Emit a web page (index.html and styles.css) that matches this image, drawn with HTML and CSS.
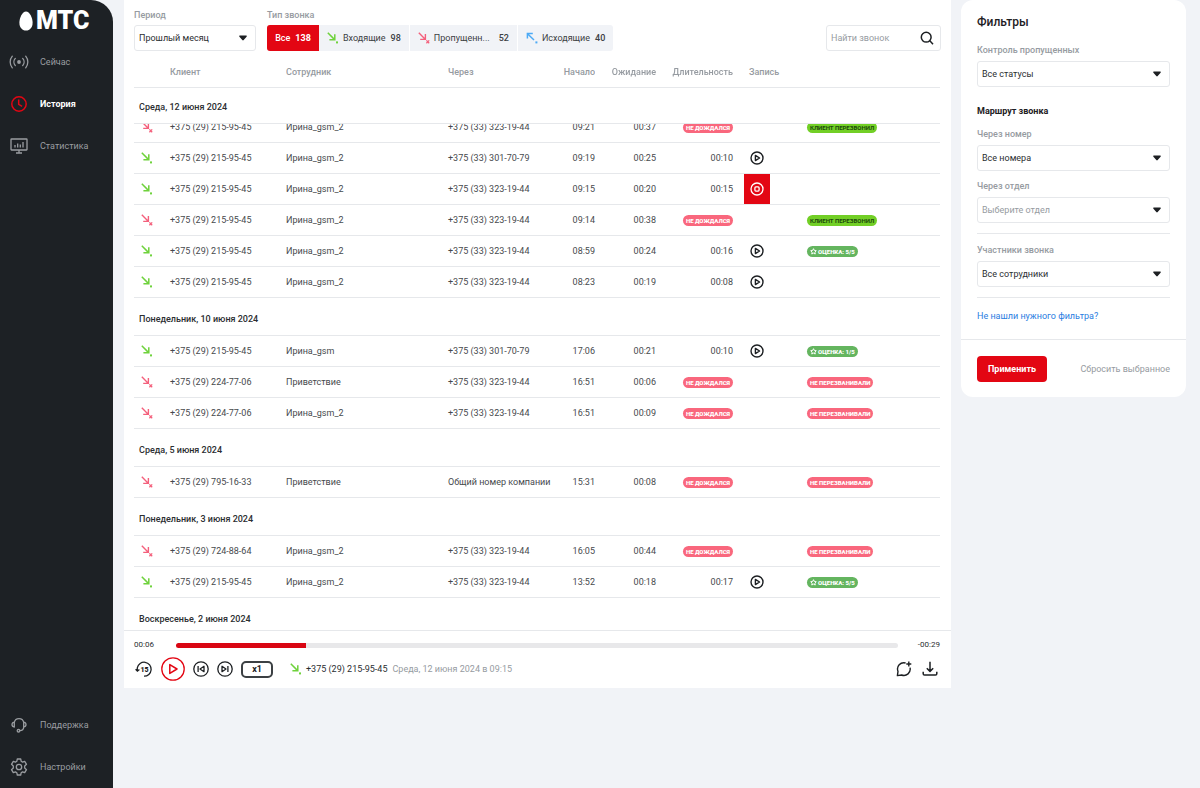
FILE: index.html
```html
<!DOCTYPE html>
<html lang="ru">
<head>
<meta charset="utf-8">
<meta name="viewport" content="width=device-width, initial-scale=1">
<title>МТС — История звонков</title>
<link rel="stylesheet" href="styles.css">
</head>
<body>
<svg class="sprite" aria-hidden="true">
  <symbol id="in" viewBox="0 0 12 12"><path d="M.8.8 7.6 7.6M7.8 2.2v5.6H2.4" fill="none" stroke="#6fd23c" stroke-width="1.5"/><rect x="9" y="9.4" width="2" height="2" fill="#6fd23c"/></symbol>
  <symbol id="missed" viewBox="0 0 12 12"><path d="M.8.8 7.2 7.2M7.4 2v5.4H2.2" fill="none" stroke="#f4607c" stroke-width="1.4"/><path d="m8.4 8.4 2.8 2.8m0-2.8-2.8 2.8" stroke="#f4607c" stroke-width="1.3"/></symbol>
  <symbol id="out" viewBox="0 0 12 12"><path d="M1 1.2 8 8M1.4 6.6V1.4h5.4" fill="none" stroke="#4daaf5" stroke-width="1.5"/><rect x="9.4" y="9.4" width="2" height="2" fill="#4daaf5"/></symbol>
  <symbol id="play" viewBox="0 0 14 14"><g fill="none" stroke="currentColor" stroke-width="1.4" stroke-linejoin="round"><circle cx="7" cy="7" r="6"/><path d="M5.4 4.4v5.2L9.6 7z"/></g></symbol>
  <symbol id="stop" viewBox="0 0 14 14"><g fill="none" stroke="currentColor" stroke-width="1.3"><circle cx="7" cy="7" r="6"/><rect x="4.9" y="4.9" width="4.2" height="4.2" rx="1"/></g></symbol>
  <symbol id="caret" viewBox="0 0 8 6"><path d="M1 .5h6c.8 0 1 .7.6 1.200L4.700 5.100c-.4.5-1 .5-1.400 0L.4 1.700C0 1.200.2.5 1 .5z" fill="#1d2023"/></symbol>
  <symbol id="star" viewBox="0 0 10 10"><path d="m5 1 1.200 2.500 2.800.4-2 2 .5 2.700L5 7.300 2.500 8.600 3 5.900l-2-2 2.800-.4z" fill="none" stroke="#fff" stroke-width="1.400"/></symbol>
</svg>

<div class="app">
  <aside class="sidebar">
    <a class="logo" href="#" aria-label="МТС">
      <svg width="14" height="20" viewBox="0 0 14 20" aria-hidden="true"><path d="M7 .5c3.600 0 6.600 6.200 6.600 11.200 0 4.600-2.600 7.800-6.600 7.800S.4 16.300.4 11.700C.4 6.700 3.400.5 7 .5z" fill="#fff"/></svg>
      <span>МТС</span>
    </a>
    <nav class="menu">
      <a class="menu-item" href="#">
        <svg width="20" height="14" viewBox="0 0 20 14" fill="none" stroke="currentColor" stroke-width="1.300" stroke-linecap="round"><circle cx="10" cy="7" r="1.900" fill="currentColor" stroke="none"/><path d="M6.300 3.400a5.400 5.400 0 0 0 0 7.200M13.700 3.400a5.400 5.400 0 0 1 0 7.200M3.300 1.200a9 9 0 0 0 0 11.600M16.700 1.200a9 9 0 0 1 0 11.600"/></svg>
        <span>Сейчас</span>
      </a>
      <a class="menu-item active" href="#">
        <svg width="20" height="18" viewBox="0 0 20 18" fill="none" stroke="#e30613" stroke-width="1.500"><circle cx="10" cy="9" r="7.200"/><path d="M9.700 4.500V9.400l3.400 2"/></svg>
        <span>История</span>
      </a>
      <a class="menu-item" href="#">
        <svg width="20" height="16" viewBox="0 0 20 16" fill="none" stroke="currentColor" stroke-width="1.300"><rect x="2" y="1" width="16" height="11" rx=".5"/><path d="M10 12v2.500M7 15h6M6 9.500V7M8.700 9.500V5.500M11.300 9.500V6.500M14 9.500V4"/></svg>
        <span>Статистика</span>
      </a>
      <a class="menu-item menu-bottom" href="#">
        <svg width="20" height="16" viewBox="0 0 20 16" fill="none" stroke="currentColor" stroke-width="1.300" stroke-linejoin="round"><path d="M5.300 5.400a4.800 4.800 0 0 1 9.400 0M5.300 5.200v4.800c-1.600 0-2.300-.9-2.300-2.400s.7-2.400 2.300-2.400zM14.700 5.200v4.800c1.600 0 2.300-.9 2.300-2.400s-.7-2.400-2.300-2.400zM14.700 10c0 2.400-1.300 3.700-3.900 3.700"/><circle cx="9.500" cy="13.700" r="1.300"/></svg>
        <span>Поддержка</span>
      </a>
      <a class="menu-item" href="#">
        <svg width="20" height="18" viewBox="0 0 20 18" fill="none" stroke="currentColor" stroke-width="1.300" stroke-linejoin="round"><path d="M8.300 1h3.400l.5 2.300 1.300.8 2.200-.8 1.800 3-1.800 1.600v2.200l1.800 1.600-1.800 3-2.200-.8-1.300.8-.5 2.300H8.300l-.5-2.300-1.300-.8-2.200.8-1.800-3 1.800-1.600V7.900L2.500 6.300l1.800-3 2.200.8 1.300-.8z"/><circle cx="10" cy="9" r="2.700"/></svg>
        <span>Настройки</span>
      </a>
    </nav>
  </aside>

  <main class="calls">
    <form class="toolbar">
      <div class="field period">
        <label for="period">Период</label>
        <div class="select"><select id="period"><option>Прошлый месяц</option></select><svg><use href="#caret"/></svg></div>
      </div>
      <div class="field">
        <span class="caption" id="type-caption">Тип звонка</span>
        <div class="types" role="group" aria-labelledby="type-caption">
          <button type="button" class="type type-all">Все <b>138</b></button>
          <button type="button" class="type"><svg><use href="#in"/></svg><span>Входящие</span><b>98</b></button>
          <button type="button" class="type type-missed"><svg><use href="#missed"/></svg><span>Пропущенн...</span><b>52</b></button>
          <button type="button" class="type"><svg><use href="#out"/></svg><span>Исходящие</span><b>40</b></button>
        </div>
      </div>
      <div class="search">
        <input type="text" placeholder="Найти звонок" aria-label="Найти звонок">
        <button type="submit" aria-label="Найти"><svg width="14" height="14" viewBox="0 0 14 14" fill="none" stroke="#1d2023" stroke-width="1.500"><circle cx="6.200" cy="6.200" r="4.900"/><path d="m9.600 9.600 3.400 3.600"/></svg></button>
      </div>
    </form>

    <div class="list" id="list">
      <table>
        <colgroup><col class="c-icon"><col class="c-client"><col class="c-employee"><col class="c-via"><col class="c-start"><col class="c-wait"><col class="c-length"><col class="c-record"><col></colgroup>
        <thead>
          <tr><th></th><th>Клиент</th><th>Сотрудник</th><th>Через</th><th class="num">Начало</th><th class="num">Ожидание</th><th class="num">Длительность</th><th class="record-head">Запись</th><th></th></tr>
        </thead>
        <tbody>
          <tr class="day"><th colspan="9">Среда, 12 июня 2024</th></tr>
          <tr><td><svg><use href="#missed"/></svg></td><td>+375 (29) 215-95-45</td><td>Ирина_gsm_2</td><td>+375 (33) 323-19-44</td><td class="num">09:21</td><td class="num">00:37</td><td class="num"><span class="tag red">НЕ ДОЖДАЛСЯ</span></td><td></td><td><span class="tag lime">КЛИЕНТ ПЕРЕЗВОНИЛ</span></td></tr>
          <tr><td><svg><use href="#in"/></svg></td><td>+375 (29) 215-95-45</td><td>Ирина_gsm_2</td><td>+375 (33) 301-70-79</td><td class="num">09:19</td><td class="num">00:25</td><td class="num">00:10</td><td><button class="record" aria-label="Слушать"><svg><use href="#play"/></svg></button></td><td></td></tr>
          <tr><td><svg><use href="#in"/></svg></td><td>+375 (29) 215-95-45</td><td>Ирина_gsm_2</td><td>+375 (33) 323-19-44</td><td class="num">09:15</td><td class="num">00:20</td><td class="num">00:15</td><td><button class="record current" aria-label="Остановить"><svg><use href="#stop"/></svg></button></td><td></td></tr>
          <tr><td><svg><use href="#missed"/></svg></td><td>+375 (29) 215-95-45</td><td>Ирина_gsm_2</td><td>+375 (33) 323-19-44</td><td class="num">09:14</td><td class="num">00:38</td><td class="num"><span class="tag red">НЕ ДОЖДАЛСЯ</span></td><td></td><td><span class="tag lime">КЛИЕНТ ПЕРЕЗВОНИЛ</span></td></tr>
          <tr><td><svg><use href="#in"/></svg></td><td>+375 (29) 215-95-45</td><td>Ирина_gsm_2</td><td>+375 (33) 323-19-44</td><td class="num">08:59</td><td class="num">00:24</td><td class="num">00:16</td><td><button class="record" aria-label="Слушать"><svg><use href="#play"/></svg></button></td><td><span class="tag green"><svg><use href="#star"/></svg>ОЦЕНКА: 5/5</span></td></tr>
          <tr><td><svg><use href="#in"/></svg></td><td>+375 (29) 215-95-45</td><td>Ирина_gsm_2</td><td>+375 (33) 323-19-44</td><td class="num">08:23</td><td class="num">00:19</td><td class="num">00:08</td><td><button class="record" aria-label="Слушать"><svg><use href="#play"/></svg></button></td><td></td></tr>
        </tbody>
        <tbody>
          <tr class="day"><th colspan="9">Понедельник, 10 июня 2024</th></tr>
          <tr><td><svg><use href="#in"/></svg></td><td>+375 (29) 215-95-45</td><td>Ирина_gsm</td><td>+375 (33) 301-70-79</td><td class="num">17:06</td><td class="num">00:21</td><td class="num">00:10</td><td><button class="record" aria-label="Слушать"><svg><use href="#play"/></svg></button></td><td><span class="tag green"><svg><use href="#star"/></svg>ОЦЕНКА: 1/5</span></td></tr>
          <tr><td><svg><use href="#missed"/></svg></td><td>+375 (29) 224-77-06</td><td>Приветствие</td><td>+375 (33) 323-19-44</td><td class="num">16:51</td><td class="num">00:06</td><td class="num"><span class="tag red">НЕ ДОЖДАЛСЯ</span></td><td></td><td><span class="tag red">НЕ ПЕРЕЗВАНИВАЛИ</span></td></tr>
          <tr><td><svg><use href="#missed"/></svg></td><td>+375 (29) 224-77-06</td><td>Ирина_gsm_2</td><td>+375 (33) 323-19-44</td><td class="num">16:51</td><td class="num">00:09</td><td class="num"><span class="tag red">НЕ ДОЖДАЛСЯ</span></td><td></td><td><span class="tag red">НЕ ПЕРЕЗВАНИВАЛИ</span></td></tr>
        </tbody>
        <tbody>
          <tr class="day"><th colspan="9">Среда, 5 июня 2024</th></tr>
          <tr><td><svg><use href="#missed"/></svg></td><td>+375 (29) 795-16-33</td><td>Приветствие</td><td>Общий номер компании</td><td class="num">15:31</td><td class="num">00:08</td><td class="num"><span class="tag red">НЕ ДОЖДАЛСЯ</span></td><td></td><td><span class="tag red">НЕ ПЕРЕЗВАНИВАЛИ</span></td></tr>
        </tbody>
        <tbody>
          <tr class="day"><th colspan="9">Понедельник, 3 июня 2024</th></tr>
          <tr><td><svg><use href="#missed"/></svg></td><td>+375 (29) 724-88-64</td><td>Ирина_gsm_2</td><td>+375 (33) 323-19-44</td><td class="num">16:05</td><td class="num">00:44</td><td class="num"><span class="tag red">НЕ ДОЖДАЛСЯ</span></td><td></td><td><span class="tag red">НЕ ПЕРЕЗВАНИВАЛИ</span></td></tr>
          <tr><td><svg><use href="#in"/></svg></td><td>+375 (29) 215-95-45</td><td>Ирина_gsm_2</td><td>+375 (33) 323-19-44</td><td class="num">13:52</td><td class="num">00:18</td><td class="num">00:17</td><td><button class="record" aria-label="Слушать"><svg><use href="#play"/></svg></button></td><td><span class="tag green"><svg><use href="#star"/></svg>ОЦЕНКА: 5/5</span></td></tr>
        </tbody>
        <tbody>
          <tr class="day"><th colspan="9">Воскресенье, 2 июня 2024</th></tr>
        </tbody>
      </table>
    </div>

    <section class="player" aria-label="Проигрыватель">
      <div class="timeline">
        <span class="time">00:06</span>
        <input class="seek" type="range" min="0" max="100" value="18" aria-label="Позиция записи">
        <span class="time time-left">-00:29</span>
      </div>
      <div class="controls">
        <button aria-label="Назад на 15 секунд"><svg width="18" height="18" viewBox="0 0 18 18"><path d="M2.300 11V7.800A7 7 0 1 1 9 16.200M.6 9.200l1.800 2 2-1.800" fill="none" stroke="#1d2023" stroke-width="1.300"/><text x="9.500" y="11.600" text-anchor="middle" class="rewind-text">15</text></svg></button>
        <button aria-label="Воспроизвести"><svg width="24" height="24" viewBox="0 0 24 24" fill="none" stroke="#e30613" stroke-width="1.300" stroke-linejoin="round"><circle cx="12" cy="12" r="11.200"/><path d="M8.800 7.600v8.800l7.200-4.400z" stroke-width="1.500"/></svg></button>
        <button aria-label="Предыдущая запись"><svg width="16" height="16" viewBox="0 0 16 16" fill="none" stroke="#1d2023" stroke-width="1.300" stroke-linejoin="round"><circle cx="8" cy="8" r="7.200"/><path d="M5.100 5v6M11 5.300v5.400L7 8z"/></svg></button>
        <button aria-label="Следующая запись"><svg width="16" height="16" viewBox="0 0 16 16" fill="none" stroke="#1d2023" stroke-width="1.300" stroke-linejoin="round"><circle cx="8" cy="8" r="7.200"/><path d="M10.900 5v6M5 5.300v5.400L9 8z"/></svg></button>
        <button class="speed">x1</button>
        <svg class="direction"><use href="#in"/></svg>
        <span class="phone">+375 (29) 215-95-45</span>
        <span class="date">Среда, 12 июня 2024 в 09:15</span>
        <button class="comment" aria-label="Добавить комментарий"><svg width="16" height="16" viewBox="0 0 16 16" fill="none" stroke="#1d2023" stroke-width="1.400" stroke-linejoin="round"><path d="M9.600 2A6.300 6.300 0 0 0 2 10.400L1.400 14.600 5.600 14A6.300 6.300 0 0 0 14 6.600M12.800.5v5M10.300 3h5"/></svg></button>
        <button aria-label="Скачать"><svg width="16" height="16" viewBox="0 0 16 16" fill="none" stroke="#1d2023" stroke-width="1.500" stroke-linejoin="round"><path d="M8 .8v9.400M4.800 7.200 8 10.400l3.200-3.200M1.200 10.800v2c0 .8.500 1.300 1.300 1.300h11c.8 0 1.300-.5 1.300-1.300v-2"/></svg></button>
      </div>
    </section>
  </main>

  <form class="filters">
    <div class="filters-body">
      <h2>Фильтры</h2>
      <div class="field">
        <label for="control">Контроль пропущенных</label>
        <div class="select"><select id="control"><option>Все статусы</option></select><svg><use href="#caret"/></svg></div>
      </div>
      <h3>Маршрут звонка</h3>
      <div class="field">
        <label for="number">Через номер</label>
        <div class="select"><select id="number"><option>Все номера</option></select><svg><use href="#caret"/></svg></div>
      </div>
      <div class="field next">
        <label for="department">Через отдел</label>
        <div class="select"><select id="department" class="empty"><option>Выберите отдел</option></select><svg><use href="#caret"/></svg></div>
      </div>
      <hr>
      <div class="field">
        <label for="members">Участники звонка</label>
        <div class="select"><select id="members"><option>Все сотрудники</option></select><svg><use href="#caret"/></svg></div>
      </div>
      <hr>
      <a class="help" href="#">Не нашли нужного фильтра?</a>
    </div>
    <div class="filters-footer">
      <button type="submit" class="apply">Применить</button>
      <button type="reset" class="reset">Сбросить выбранное</button>
    </div>
  </form>
</div>
<script src="script.js"></script>
</body>
</html>
```

FILE: styles.css
```css
* { box-sizing: border-box; }

body {
  margin: 0;
  background: #f1f3f7;
  color: #46494d;
  font: 9px/12px Roboto, "Liberation Sans", sans-serif;
}

button, input, select { font: inherit; color: inherit; }

button {
  margin: 0;
  padding: 0;
  border: 0;
  background: none;
  cursor: pointer;
}

a { text-decoration: none; }
svg { display: block; flex: none; }
.sprite { position: absolute; width: 0; height: 0; }

.app {
  display: flex;
  align-items: flex-start;
  min-height: 100vh;
  padding-right: 14px;
}

/* Sidebar */
.sidebar {
  display: flex;
  flex-direction: column;
  flex: 0 0 113px;
  height: 100vh;
  background: #1d2125;
  border-radius: 0 22px 0 0;
}

.logo {
  display: flex;
  align-items: center;
  gap: 3px;
  height: 41px;
  padding-left: 19px;
  color: #fff;
  font-size: 25px;
  font-weight: 900;
  line-height: 41px;
}

.menu { display: flex; flex-direction: column; flex: 1; }

.menu-item {
  display: flex;
  align-items: center;
  gap: 11px;
  height: 42px;
  padding-left: 9px;
  color: #9a9da1;
}

.menu-item.active { color: #fff; font-weight: 700; }
.menu-bottom { margin-top: auto; }

/* Call list */
.calls {
  display: flex;
  flex-direction: column;
  flex: 1;
  min-width: 0;
  height: calc(100vh - 100px);
  margin: 0 10px 0 11px;
  background: #fff;
}

.toolbar {
  display: flex;
  align-items: flex-end;
  gap: 11px;
  padding: 9px 10px 5px;
}

.field { display: flex; flex-direction: column; gap: 4px; }
.field label, .caption { color: #969ba1; font-weight: 500; }
.period { width: 122px; }

.select { display: grid; align-items: center; }
.select > * { grid-area: 1 / 1; }

.select select {
  width: 100%;
  height: 26px;
  padding: 0 24px 0 4px;
  border: 1px solid #e6e8eb;
  border-radius: 3px;
  background: #fff;
  color: #2b2e31;
  appearance: none;
}

.select select.empty { color: #969ba1; }

.select svg {
  justify-self: end;
  width: 8px;
  height: 6px;
  margin-right: 9px;
  pointer-events: none;
}

.types {
  display: flex;
  height: 26px;
  border-radius: 3px;
  background: #f1f3f7;
  overflow: hidden;
}

.type {
  display: flex;
  align-items: center;
  gap: 4px;
  padding: 0 8px;
  color: #3c4043;
}

.type b { margin-left: 1px; font-weight: 500; }
.type + .type { border-right: 1px solid #fff; }
.type:last-child { border: 0; }
.type svg { width: 12px; height: 12px; }
.type-all { width: 52px; justify-content: center; background: #e30613; color: #fff; font-weight: 500; }
.type-all b { font-weight: 700; }
.type-missed b { margin-left: 5px; }

.search {
  display: flex;
  width: 115px;
  height: 26px;
  margin-left: auto;
  border: 1px solid #e6e8eb;
  border-radius: 3px;
}

.search input {
  flex: 1;
  min-width: 0;
  padding: 0 4px;
  border: 0;
  background: none;
}

.search input::placeholder { color: #969ba1; opacity: 1; }
.search button { padding: 0 6px; }

.list {
  flex: 1;
  min-height: 0;
  padding: 0 11px 60px 10px;
  overflow-y: auto;
  scrollbar-width: none;
}

table {
  width: 100%;
  table-layout: fixed;
  border-collapse: separate;
  border-spacing: 0;
}

.c-icon { width: 36px; }
.c-client { width: 116px; }
.c-employee { width: 162px; }
.c-via { width: 115px; }
.c-start { width: 32px; }
.c-wait { width: 61px; }
.c-length { width: 77px; }
.c-record { width: 74px; }

th, td {
  padding: 0;
  border-bottom: 1px solid #e6e8eb;
  text-align: left;
  white-space: nowrap;
}

thead th {
  position: sticky;
  top: 0;
  z-index: 2;
  height: 32px;
  background: #fff;
  color: #969ba1;
  font-weight: 500;
}

td { height: 31px; }
th.num, td.num { text-align: right; }
.record-head { padding-left: 16px; }
td:first-child svg { width: 12px; height: 12px; margin-left: 7px; }

.day th {
  position: sticky;
  top: 30px;
  z-index: 1;
  height: 38px;
  padding: 5px 0 0 5px;
  background: #fff;
  color: #2b2e31;
  font-weight: 500;
}

.record {
  display: grid;
  place-items: center;
  width: 26px;
  height: 30px;
  margin-left: 11px;
  color: #1d2023;
}

.record.current { background: #e30613; color: #fff; }
.record svg { width: 14px; height: 14px; }

.tag {
  display: inline-flex;
  align-items: center;
  gap: 1px;
  height: 11px;
  padding: 0 3px;
  border-radius: 6px;
  color: #fff;
  font-size: 6px;
  font-weight: 900;
  line-height: 11px;
  vertical-align: middle;
}

.tag.red { background: #f9677d; }
.tag.lime { background: #72cf26; color: #1d4a0b; font-weight: 700; }
.tag.green { background: #64b55f; }
.tag svg { width: 7px; height: 7px; }

/* Player */
.player {
  padding: 8px 11px 5px 10px;
  border-top: 1px solid #e6e8eb;
}

.timeline { display: flex; align-items: center; }
.time { width: 42px; font-size: 8px; color: #2b2e31; }
.time-left { text-align: right; }

.seek {
  flex: 1;
  min-width: 0;
  height: 5px;
  margin: 0;
  border-radius: 3px;
  background: linear-gradient(90deg, #d90613 18%, #e8e8ea 18%);
  appearance: none;
}

.seek::-webkit-slider-thumb { width: 1px; height: 5px; appearance: none; }

.controls {
  display: flex;
  align-items: center;
  gap: 8px;
  height: 32px;
  padding: 4px 2px 0 1px;
}

.rewind-text { font-size: 7px; font-weight: 900; fill: #1d2023; }

.speed {
  width: 32px;
  height: 17px;
  border: 2px solid #3c4043;
  border-radius: 5px;
  color: #1d2023;
  font-weight: 700;
  line-height: 12px;
}

.direction { width: 12px; height: 12px; margin-left: 9px; }
.phone { margin-left: -4px; color: #2b2e31; }
.date { margin-left: -3px; color: #969ba1; }
.comment { margin: 0 2px 0 auto; }

/* Filters */
.filters {
  flex: 0 0 225px;
  border-radius: 12px;
  background: #fff;
}

.filters-body { padding: 14px 16px 17px; }
.filters .field { gap: 5px; }
.filters h2 { margin: 0 0 14px; color: #1d2023; font-size: 12px; font-weight: 500; line-height: 16px; }
.filters h3 { margin: 18px 0 11px; color: #1d2023; font-size: 9px; font-weight: 700; line-height: 12px; }
.filters .next { margin-top: 9px; }
.filters hr { height: 1px; margin: 10px 0; border: 0; background: #e6e8eb; }
.help { display: block; padding-top: 2px; color: #2a7de1; }

.filters-footer {
  display: flex;
  align-items: center;
  justify-content: space-between;
  padding: 16px 16px 15px;
  border-top: 1px solid #e6e8eb;
}

.apply {
  width: 70px;
  height: 26px;
  border-radius: 4px;
  background: #e30613;
  color: #fff;
  font-weight: 700;
}

.reset { color: #969ba1; }
```

FILE: script.js
```js
document.getElementById('list').scrollTop = 14;
```
